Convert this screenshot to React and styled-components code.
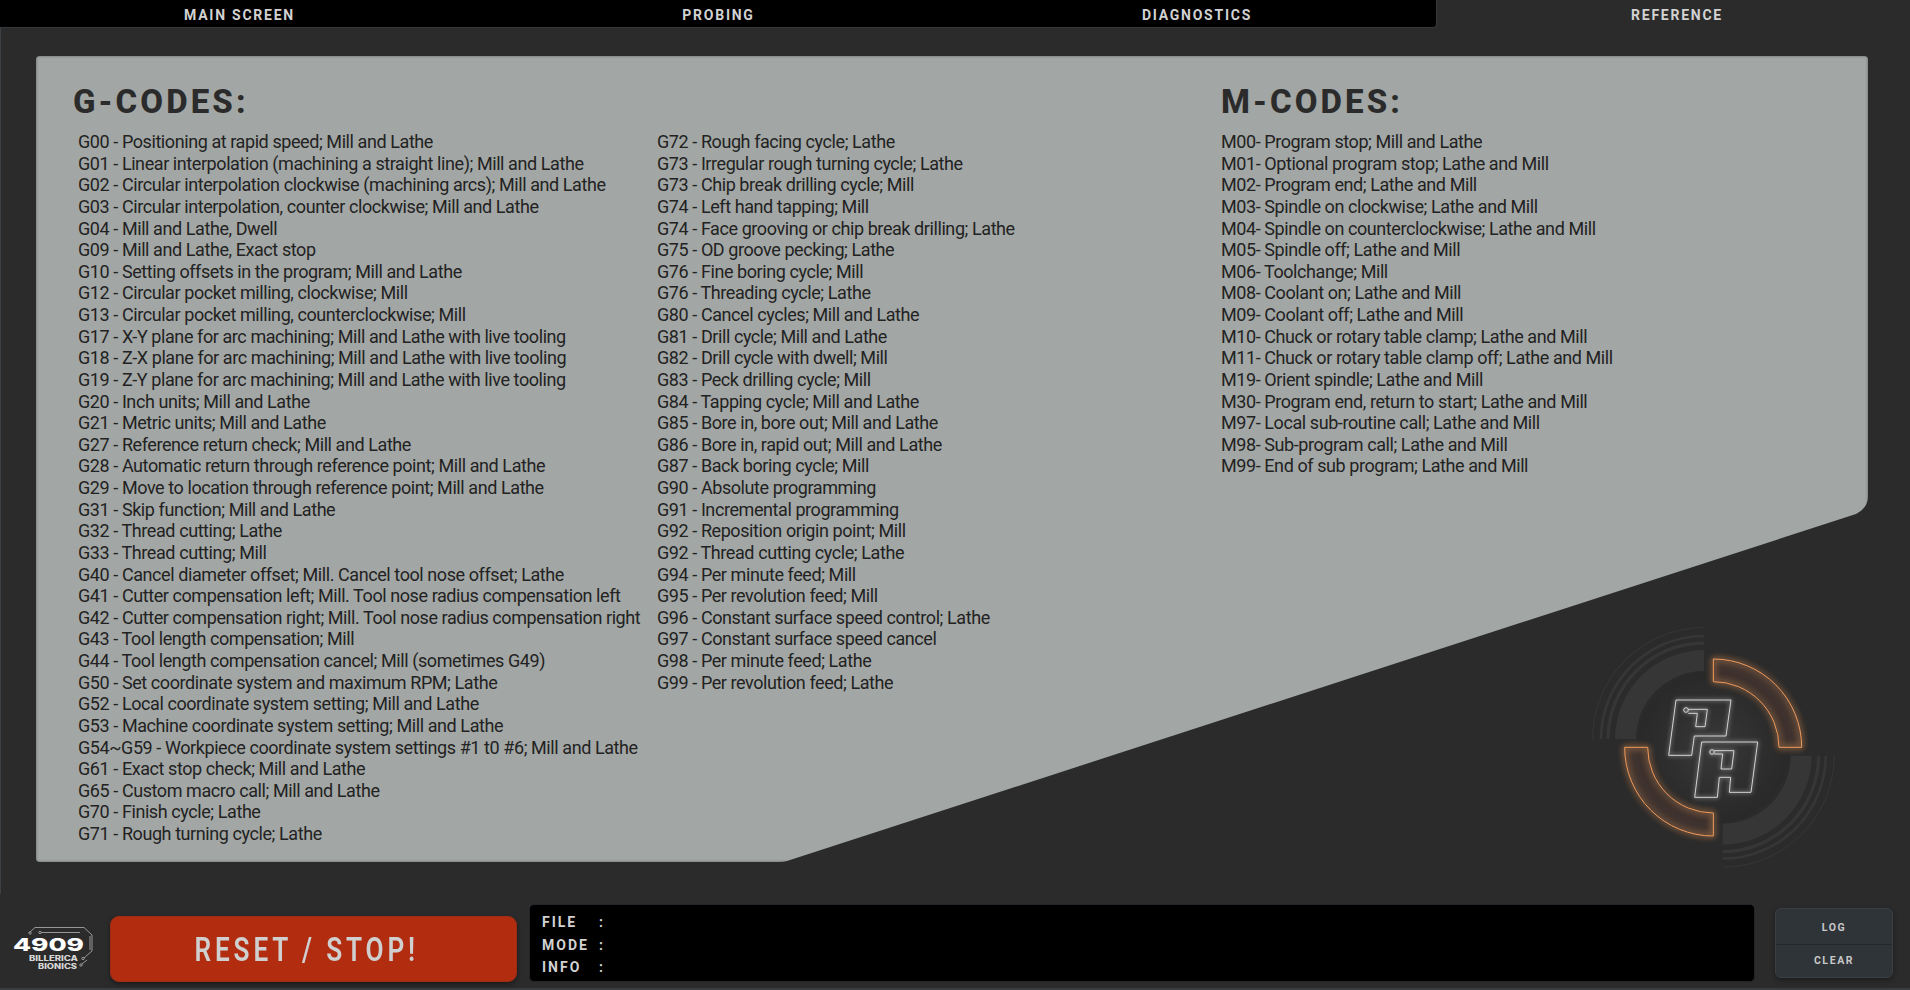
import React from "react";
import styled, { createGlobalStyle } from "styled-components";

const GlobalStyle = createGlobalStyle`
  html, body {
    margin: 0;
    padding: 0;
    height: 100%;
    overflow: hidden;
    background: #2b2b2b;
  }
  * { box-sizing: border-box; }
`;

const Page = styled.div`
  position: relative;
  width: 1910px;
  height: 990px;
  display: flex;
  flex-direction: column;
  background: #2b2b2b;
  border-bottom: 2px solid #3a3d40;
  font-family: Roboto, "Liberation Sans", sans-serif;
`;

const TabBar = styled.div`
  height: 28px;
  display: flex;
  flex-shrink: 0;
`;

const Tab = styled.div`
  flex: ${(p) => (p.$active ? "1" : "0 0 479px")};
  display: flex;
  align-items: center;
  justify-content: center;
  padding: ${(p) => (p.$active ? "2px 0 0 7px" : "2px 0 0 0")};
  background: ${(p) => (p.$active ? "#2b2b2b" : "#000")};
  color: #d2d2d2;
  font-size: 14px;
  font-weight: 700;
  letter-spacing: 1.75px;
  border-bottom: ${(p) => (p.$active ? "none" : "1px solid #33383d")};
  border-right: ${(p) => (p.$last ? "1px solid #33383d" : "none")};
  border-bottom-right-radius: ${(p) => (p.$last ? "4px" : "0")};
`;

const Main = styled.div`
  flex: 1;
  border-left: 1px solid #3b4045;
  padding: 28px 0 0 35px;
`;

const Panel = styled.div`
  width: 1832px;
  height: 806px;
  display: flex;
  padding: 0 0 0 37px;
  background: #a2a7a5;
  box-shadow: inset 0 0 3px #5e6361;
  clip-path: path("M4 0 H1828 Q1832 0 1832 4 V440 Q1832 452 1820 458 L751 805 Q747 806 743 806 H4 Q0 806 0 802 V4 Q0 0 4 0 Z");
`;

const GBlock = styled.div`
  width: 1148px;
`;

const Title = styled.h1`
  margin: 0;
  height: 75px;
  padding-top: 28px;
  color: #2b2b2b;
  font-size: 33px;
  line-height: 36px;
  font-weight: 800;
  letter-spacing: 3.1px;
`;

const Columns = styled.div`
  display: flex;
  padding-left: 5px;
`;

const List = styled.div`
  width: ${(p) => p.$width || "auto"};
  color: #222;
  font-size: 18px;
  line-height: 21.63px;
  letter-spacing: -0.42px;
  white-space: nowrap;
`;

const Row = styled.div`
  height: 21.63px;
`;

const Code = styled.span`
  display: inline-block;
  min-width: ${(p) => p.$width};
`;

const Footer = styled.div`
  height: 94px;
  display: flex;
  align-items: flex-start;
  padding-top: 10px;
`;

const LogoBox = styled.div`
  width: 110px;
  height: 78px;
  flex-shrink: 0;
  padding: 23px 0 0 10px;
`;

const ResetButton = styled.button`
  width: 407px;
  height: 66px;
  margin-top: 12px;
  padding: 0 14px 0 0;
  flex-shrink: 0;
  border: 1px solid #9c2c14;
  border-radius: 9px;
  background: #b22d10;
  box-shadow: 0 2px 4px rgba(0, 0, 0, 0.4);
`;

const ResetLabel = styled.span`
  display: inline-block;
  color: #cfcfcf;
  font-family: Roboto, sans-serif;
  font-size: 34px;
  font-weight: 600;
  letter-spacing: 5px;
  white-space: nowrap;
  transform: scaleX(0.77);
`;

const Console = styled.div`
  width: 1226px;
  height: 78px;
  margin-left: 12px;
  padding: 6px 0 0 12px;
  flex-shrink: 0;
  background: #000;
  border: 1px solid #22262a;
  border-radius: 5px;
`;

const ConsoleRow = styled.div`
  display: flex;
  height: 22.5px;
  align-items: center;
  color: #d2d2d2;
  font-size: 14px;
  font-weight: 700;
  letter-spacing: 2px;
`;

const ConsoleLabel = styled.span`
  width: 57px;
`;

const ButtonStack = styled.div`
  width: 118px;
  height: 70px;
  margin: 4px 0 0 20px;
  display: flex;
  flex-direction: column;
  background: #2f3439;
  border: 1px solid #3a3f44;
  border-radius: 6px;
  box-shadow: 0 2px 5px rgba(0, 0, 0, 0.35);
`;

const SmallButton = styled.div`
  flex: 1;
  display: flex;
  align-items: center;
  justify-content: center;
  padding-top: ${(p) => (p.$divider ? "0" : "2px")};
  color: #c8c8c8;
  font-size: 10.5px;
  font-weight: 700;
  letter-spacing: 1.6px;
  border-top: ${(p) => (p.$divider ? "1px solid #25282b" : "none")};
`;

const Emblem = styled.svg`
  position: absolute;
  left: 1560px;
  top: 610px;
  width: 300px;
  height: 280px;
`;

const gCol1 = [
  ["G00", "Positioning at rapid speed; Mill and Lathe"],
  ["G01", "Linear interpolation (machining a straight line); Mill and Lathe"],
  ["G02", "Circular interpolation clockwise (machining arcs); Mill and Lathe"],
  ["G03", "Circular interpolation, counter clockwise; Mill and Lathe"],
  ["G04", "Mill and Lathe, Dwell"],
  ["G09", "Mill and Lathe, Exact stop"],
  ["G10", "Setting offsets in the program; Mill and Lathe"],
  ["G12", "Circular pocket milling, clockwise; Mill"],
  ["G13", "Circular pocket milling, counterclockwise; Mill"],
  ["G17", "X-Y plane for arc machining; Mill and Lathe with live tooling"],
  ["G18", "Z-X plane for arc machining; Mill and Lathe with live tooling"],
  ["G19", "Z-Y plane for arc machining; Mill and Lathe with live tooling"],
  ["G20", "Inch units; Mill and Lathe"],
  ["G21", "Metric units; Mill and Lathe"],
  ["G27", "Reference return check; Mill and Lathe"],
  ["G28", "Automatic return through reference point; Mill and Lathe"],
  ["G29", "Move to location through reference point; Mill and Lathe"],
  ["G31", "Skip function; Mill and Lathe"],
  ["G32", "Thread cutting; Lathe"],
  ["G33", "Thread cutting; Mill"],
  ["G40", "Cancel diameter offset; Mill. Cancel tool nose offset; Lathe"],
  ["G41", "Cutter compensation left; Mill. Tool nose radius compensation left"],
  ["G42", "Cutter compensation right; Mill. Tool nose radius compensation right"],
  ["G43", "Tool length compensation; Mill"],
  ["G44", "Tool length compensation cancel; Mill (sometimes G49)"],
  ["G50", "Set coordinate system and maximum RPM; Lathe"],
  ["G52", "Local coordinate system setting; Mill and Lathe"],
  ["G53", "Machine coordinate system setting; Mill and Lathe"],
  ["G54~G59", "Workpiece coordinate system settings #1 t0 #6; Mill and Lathe"],
  ["G61", "Exact stop check; Mill and Lathe"],
  ["G65", "Custom macro call; Mill and Lathe"],
  ["G70", "Finish cycle; Lathe"],
  ["G71", "Rough turning cycle; Lathe"],
];

const gCol2 = [
  ["G72", "Rough facing cycle; Lathe"],
  ["G73", "Irregular rough turning cycle; Lathe"],
  ["G73", "Chip break drilling cycle; Mill"],
  ["G74", "Left hand tapping; Mill"],
  ["G74", "Face grooving or chip break drilling; Lathe"],
  ["G75", "OD groove pecking; Lathe"],
  ["G76", "Fine boring cycle; Mill"],
  ["G76", "Threading cycle; Lathe"],
  ["G80", "Cancel cycles; Mill and Lathe"],
  ["G81", "Drill cycle; Mill and Lathe"],
  ["G82", "Drill cycle with dwell; Mill"],
  ["G83", "Peck drilling cycle; Mill"],
  ["G84", "Tapping cycle; Mill and Lathe"],
  ["G85", "Bore in, bore out; Mill and Lathe"],
  ["G86", "Bore in, rapid out; Mill and Lathe"],
  ["G87", "Back boring cycle; Mill"],
  ["G90", "Absolute programming"],
  ["G91", "Incremental programming"],
  ["G92", "Reposition origin point; Mill"],
  ["G92", "Thread cutting cycle; Lathe"],
  ["G94", "Per minute feed; Mill"],
  ["G95", "Per revolution feed; Mill"],
  ["G96", "Constant surface speed control; Lathe"],
  ["G97", "Constant surface speed cancel"],
  ["G98", "Per minute feed; Lathe"],
  ["G99", "Per revolution feed; Lathe"],
];

const mCol = [
  ["M00", "Program stop; Mill and Lathe"],
  ["M01", "Optional program stop; Lathe and Mill"],
  ["M02", "Program end; Lathe and Mill"],
  ["M03", "Spindle on clockwise; Lathe and Mill"],
  ["M04", "Spindle on counterclockwise; Lathe and Mill"],
  ["M05", "Spindle off; Lathe and Mill"],
  ["M06", "Toolchange; Mill"],
  ["M08", "Coolant on; Lathe and Mill"],
  ["M09", "Coolant off; Lathe and Mill"],
  ["M10", "Chuck or rotary table clamp; Lathe and Mill"],
  ["M11", "Chuck or rotary table clamp off; Lathe and Mill"],
  ["M19", "Orient spindle; Lathe and Mill"],
  ["M30", "Program end, return to start; Lathe and Mill"],
  ["M97", "Local sub-routine call; Lathe and Mill"],
  ["M98", "Sub-program call; Lathe and Mill"],
  ["M99", "End of sub program; Lathe and Mill"],
];

const CodeList = ({ rows, width, codeWidth, tight }) => (
  <List $width={width}>
    {rows.map(([code, text], i) => (
      <Row key={i}>
        <Code $width={codeWidth}>{code}</Code>
        <span>{tight ? "" : " "}- {text}</span>
      </Row>
    ))}
  </List>
);

const arc = (cx, cy, r1, r2, a1, a2) => {
  const pt = (r, a) => [cx + r * Math.cos(a), cy + r * Math.sin(a)].map((n) => n.toFixed(1)).join(" ");
  return `M${pt(r2, a1)} A${r2} ${r2} 0 0 1 ${pt(r2, a2)} L${pt(r1, a2)} A${r1} ${r1} 0 0 0 ${pt(r1, a1)} Z`;
};

const PI = Math.PI;

const GreyQuadrant = ({ cx, cy, start }) => (
  <g fill="#363636">
    <path d={arc(cx, cy, 204, 267, start, start + PI / 2)} />
    <path d={arc(cx, cy, 283, 293, start, start + PI / 2)} />
    <path d={arc(cx, cy, 305, 313, start, start + PI / 2)} />
    <path d={arc(cx, cy, 333, 336, start, start + PI / 2)} />
  </g>
);

const EmblemArt = () => (
  <Emblem viewBox="0 0 900 840">
    <defs>
      <radialGradient id="core">
        <stop offset="0" stopColor="#383838" />
        <stop offset="0.7" stopColor="#2d2d2d" />
        <stop offset="1" stopColor="#292929" />
      </radialGradient>
      <filter id="glowW" x="-20%" y="-20%" width="140%" height="140%">
        <feGaussianBlur stdDeviation="6" result="b" />
        <feMerge>
          <feMergeNode in="b" />
          <feMergeNode in="SourceGraphic" />
        </feMerge>
      </filter>
      <filter id="glowO" x="-20%" y="-20%" width="140%" height="140%">
        <feGaussianBlur stdDeviation="9" result="b" />
        <feMerge>
          <feMergeNode in="b" />
          <feMergeNode in="b" />
          <feMergeNode in="SourceGraphic" />
        </feMerge>
      </filter>
    </defs>
    <circle cx="460" cy="412" r="230" fill="url(#core)" />
    <GreyQuadrant cx={432} cy={387} start={PI} />
    <GreyQuadrant cx={488} cy={437} start={0} />
    <g fill="rgba(230,140,80,0.04)" stroke="#ee9a5c" strokeWidth="3" filter="url(#glowO)">
      <path d={arc(460, 412, 197, 265, -PI / 2, 0)} />
      <path d={arc(460, 412, 197, 266, PI / 2, PI)} />
    </g>
    <g fill="none" stroke="#dedede" strokeWidth="2.8" filter="url(#glowW)">
      <path d="M348 270 H513 L498 378 H403 L395 436 H326 Z" />
      <circle cx="378" cy="300" r="7" />
      <path d="M385 298 H442 L435 350 H407 L412 310 H385" />
      <path d="M425 396 H593 L573 547 H508 L512 502 H478 L472 562 H404 Z" />
      <circle cx="456" cy="426" r="7" />
      <path d="M463 422 H522 L515 477 H483 L488 432 H463" />
    </g>
  </Emblem>
);

const Logo = () => (
  <svg width="90" height="50" viewBox="0 0 90 50">
    <g fill="none" stroke="#b4b4b4" strokeWidth="0.8">
      <path d="M20 5 L25 0.5 H74 L82 8 V24 L74 31" />
      <path d="M80 9 V23" />
      <path d="M31 5.5 H70" />
      <path d="M72 37 L77 33" />
      <circle cx="20" cy="6" r="1.2" />
      <circle cx="30" cy="5.5" r="1.2" />
      <circle cx="73" cy="31.5" r="1.2" />
      <circle cx="71" cy="38" r="1.2" />
    </g>
    <text x="3" y="23.5" fill="#fff" fontFamily="Inter, sans-serif" fontSize="18" fontWeight="800" textLength="71" lengthAdjust="spacingAndGlyphs">4909</text>
    <text x="19" y="33.5" fill="#d8d8d8" fontFamily="Inter, sans-serif" fontSize="7" fontWeight="800" textLength="49" lengthAdjust="spacingAndGlyphs">BILLERICA</text>
    <text x="28" y="41.5" fill="#d8d8d8" fontFamily="Inter, sans-serif" fontSize="7" fontWeight="800" textLength="39" lengthAdjust="spacingAndGlyphs">BIONICS</text>
  </svg>
);

const App = () => (
  <Page>
    <GlobalStyle />
    <TabBar>
      <Tab>MAIN SCREEN</Tab>
      <Tab>PROBING</Tab>
      <Tab $last>DIAGNOSTICS</Tab>
      <Tab $active>REFERENCE</Tab>
    </TabBar>
    <Main>
      <Panel>
        <GBlock>
          <Title>G-CODES:</Title>
          <Columns>
            <CodeList rows={gCol1} width="579px" codeWidth="31px" />
            <CodeList rows={gCol2} codeWidth="31px" />
          </Columns>
        </GBlock>
        <div>
          <Title>M-CODES:</Title>
          <CodeList rows={mCol} codeWidth="30px" tight />
        </div>
      </Panel>
    </Main>
    <EmblemArt />
    <Footer>
      <LogoBox>
        <Logo />
      </LogoBox>
      <ResetButton>
        <ResetLabel>RESET / STOP!</ResetLabel>
      </ResetButton>
      <Console>
        <ConsoleRow><ConsoleLabel>FILE</ConsoleLabel>:</ConsoleRow>
        <ConsoleRow><ConsoleLabel>MODE</ConsoleLabel>:</ConsoleRow>
        <ConsoleRow><ConsoleLabel>INFO</ConsoleLabel>:</ConsoleRow>
      </Console>
      <ButtonStack>
        <SmallButton>LOG</SmallButton>
        <SmallButton $divider>CLEAR</SmallButton>
      </ButtonStack>
    </Footer>
  </Page>
);

export default App;
